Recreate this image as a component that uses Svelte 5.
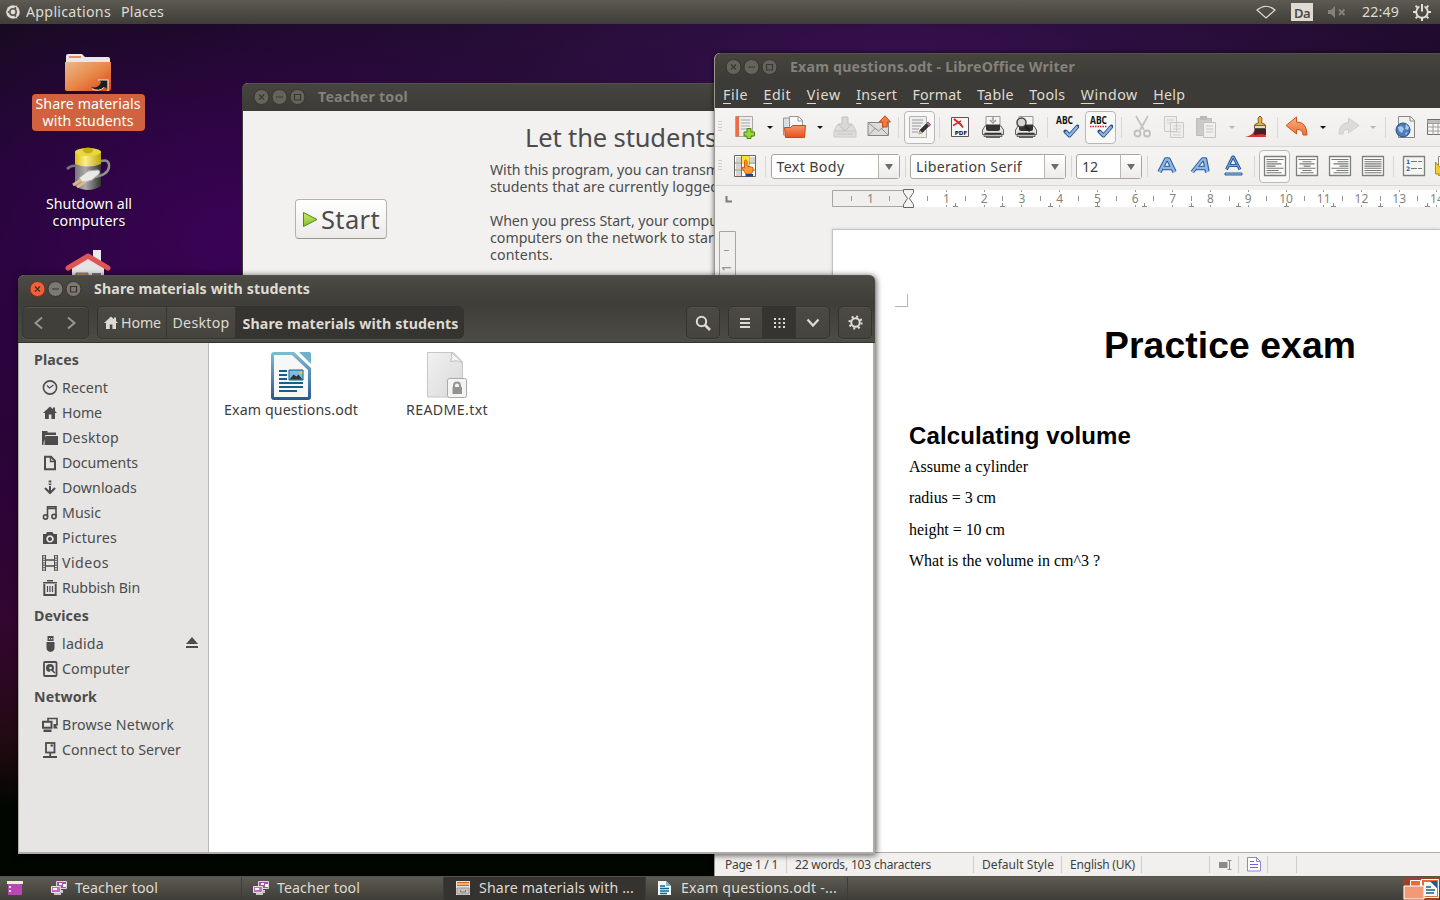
<script>
  // Spreads the letters of a label so that it takes up the given width.
  function fit(node, width) {
    if (!width) return;
    const natural = node.getBoundingClientRect().width;
    const count = node.textContent.length;
    node.style.letterSpacing = (width - natural) / count + 'px';
  }

  const sidebar = [
    { title: 'Places', w: 45, rows: [
      ['recent', 'Recent', 46], ['home', 'Home', 40], ['folder', 'Desktop', 57], ['doc', 'Documents', 76],
      ['down', 'Downloads', 75], ['music', 'Music', 39], ['camera', 'Pictures', 55], ['film', 'Videos', 47], ['bin', 'Rubbish Bin', 78]
    ] },
    { title: 'Devices', w: 55, rows: [['usb', 'ladida', 42], ['disk', 'Computer', 68]] },
    { title: 'Network', w: 63, rows: [['net', 'Browse Network', 112], ['server', 'Connect to Server', 119]] }
  ];

  const menus = [
    ['', 'F', 'ile', 25], ['', 'E', 'dit', 28], ['', 'V', 'iew', 34], ['', 'I', 'nsert', 41], ['F', 'o', 'rmat', 49],
    ['T', 'a', 'ble', 37], ['', 'T', 'ools', 36], ['', 'W', 'indow', 57], ['', 'H', 'elp', 32]
  ];

  // Each tool: kind and the centre it sits on along the bar.
  const size = { caret: 10, dcaret: 10, sep: 1, grip: 8 };
  function lay(list) {
    let end = 715;
    return list.map(([k, c, w]) => {
      const width = w ?? size[k] ?? 24;
      const gap = c - width / 2 - end;
      end = c + width / 2;
      return { k, width, gap };
    });
  }
  const bar1 = lay([
    ['grip', 720], ['new', 745], ['caret', 769.5], ['open', 794], ['caret', 819.5], ['save', 845], ['mail', 878.5], ['sep', 898.5],
    ['edit', 919.5, 31], ['sep', 939.5], ['pdf', 960], ['print', 993], ['preview', 1026], ['sep', 1047.5], ['abc', 1067],
    ['abcr', 1100.5, 31], ['sep', 1121.5], ['cut', 1141.5], ['copy', 1174], ['paste', 1206], ['dcaret', 1231.5], ['brush', 1257],
    ['sep', 1277.5], ['undo', 1296.5], ['caret', 1322.5], ['redo', 1347.5], ['dcaret', 1372.5], ['sep', 1385.5], ['globe', 1405.5], ['table', 1438]
  ]);
  const bar2 = lay([
    ['grip', 720], ['gallery', 745], ['sep', 765.5], ['Text Body', 835, 129], ['sep', 905.5], ['Liberation Serif', 988, 156],
    ['sep', 1071.5], ['12', 1109, 66], ['sep', 1147.5], ['bold', 1166.5], ['italic', 1200], ['under', 1232.5], ['sep', 1254.5],
    ['left', 1274.5, 31], ['center', 1307], ['right', 1340], ['just', 1373], ['sep', 1393.5], ['list', 1414], ['mark', 1447]
  ]);
  const comboW = { 'Text Body': 68, 'Liberation Serif': 106, '12': 16 };

  const cm = 37.73;
  const numbers = Array.from({ length: 15 }, (_, i) => i).filter((i) => i > 0);
  const halves = Array.from({ length: 16 }, (_, i) => i - 1.5);
  const stops = Array.from({ length: 11 }, (_, i) => (i + 1) * 47.2);
  const wide = { left: [17, 11, 15, 9, 17, 12, 15], center: [17, 9, 15, 7, 17, 9, 13], right: [17, 11, 15, 9, 17, 12, 15], just: [17, 17, 17, 17, 17, 17, 17] };

  const tasks = [
    ['screens', 'Teacher tool', 83], ['screens', 'Teacher tool', 83], ['cabinet', 'Share materials with ...', 155], ['writer', 'Exam questions.odt -...', 156]
  ];
</script>

{#snippet txt(s, w)}<span class="t" use:fit={w}>{s}</span>{/snippet}

{#snippet buttons(active)}
  <svg class="wb" width="54" height="18" viewBox="0 0 54 18">
    <circle cx="9.500" cy="9" r="7.500" fill={active ? '#f0613a' : '#65635c'} stroke={active ? '#7d2e17' : '#36352f'} />
    <circle cx="27.500" cy="9" r="7.500" fill={active ? '#7b7972' : '#65635c'} stroke="#36352f" />
    <circle cx="45.500" cy="9" r="7.500" fill={active ? '#7b7972' : '#65635c'} stroke="#36352f" />
    <path d="M7 6.500l5 5m0-5l-5 5M24 9h7M42.500 6.500h6v5.500h-6z" fill="none" stroke={active ? '#3a302a' : '#393832'} stroke-width="1.200" />
  </svg>
{/snippet}

{#snippet ic(k)}
  <svg width="16" height="16" viewBox="0 0 16 16" fill="none" stroke="currentColor" stroke-width="1.6">
    {#if k === 'recent'}<circle cx="8" cy="7.5" r="6.6" /><path d="M5 5.5L7.5 8l4-3" stroke-width="1.3" />
    {:else if k === 'home'}<path fill="currentColor" stroke="none" d="M8 1.5L1 8h2v6h3.8v-4.5h2.6V14H13V8h2l-2-2V2.5h-2v1.7z" />
    {:else if k === 'folder'}<path fill="currentColor" stroke="none" d="M0 1h5.500v1.500H14V5H3.500L1.500 13v2H0zM4 6h12v9H2.500V8z" />
    {:else if k === 'doc'}<path d="M3 1.800h6l4 4v8.400H3z" stroke-width="2" /><path d="M8.500 1v5.500H14" stroke-width="1.300" />
    {:else if k === 'down'}<path d="M8 6V13M3 8l5 5 5-5" stroke-width="2" /><path d="M6.700.5h2.600v2H6.700zM6.700 3.500h2.600v1.500H6.700z" fill="currentColor" stroke="none" />
    {:else if k === 'music'}<path d="M5.500 12V1.800H14v9.700M5.500 3.500H14" /><circle cx="3.500" cy="12" r="2.100" /><circle cx="12" cy="11.500" r="2.100" />
    {:else if k === 'camera'}<path fill="currentColor" stroke="none" fill-rule="evenodd" d="M1 4h3l1-2h5.500l1 2H15v10H1zM8 5.200a3.700 3.700 0 1 0 .01 0zM8 7a2 2 0 1 1-.01 0z" />
    {:else if k === 'film'}<path d="M2 0v16M14 0v16" stroke-dasharray="1.300 1.100" stroke-width="1.500" /><path d="M3.500 0v16M12.500 0v16M.6 0v16M15.400 0v16" stroke-width="1" /><path d="M4 5h8.500M4 11h8.500" stroke-width="1.300" />
    {:else if k === 'bin'}<path d="M5 .8h6M1 2.800h14" stroke-width="1.600" /><path d="M2.300 4v11h11.400V4" stroke-width="1.900" /><path d="M5.500 6v6M8 6v6M10.500 6v6" stroke-width="1.200" />
    {:else if k === 'usb'}<path fill="currentColor" stroke="none" fill-rule="evenodd" d="M5.500 0h6v5h-6zM7 2v1.500h1V2zM9.200 2v1.500h1V2zM4.500 6h8v6q0 3-4 4-4-1-4-4z" />
    {:else if k === 'disk'}<rect x="2" y="1" width="12.500" height="14" rx="1" stroke-width="1.800" /><circle cx="8" cy="7" r="4" fill="currentColor" stroke="none" /><circle cx="8.500" cy="7" r="1.300" fill="#e6e5e3" stroke="none" /><path d="M8 10l4 2" stroke="#e6e5e3" /><path d="M9 8.500l4 3.500" />
    {:else if k === 'net'}<path d="M6 4V1.500h9V8" /><path d="M1 4.800h8.500v6H1z" stroke-width="2" /><path fill="currentColor" stroke="none" d="M1.500 12.500h8V15h-8zM11.500 7H16v1.500h-2l2 3h-4.500z" />
    {:else if k === 'server'}<rect x="4" y="1" width="8.500" height="9.500" stroke-width="1.800" /><path d="M8.500 3.500H11M8.200 10.500V14M1 15h14" stroke-width="1.800" />
    {/if}
  </svg>
{/snippet}

{#snippet check(x, y)}
  <path d="M{x} {y}l4 4 8-9" fill="none" stroke="#234f88" stroke-width="4" stroke-linejoin="round" stroke-linecap="round" />
  <path d="M{x} {y}l4 4 8-9" fill="none" stroke="#8db6e6" stroke-width="2.300" stroke-linejoin="round" />
{/snippet}

{#snippet tool(k)}
  <svg width="24" height="24" viewBox="0 0 24 24" fill="none" stroke-linejoin="round">
    {#if k === 'new'}
      <path d="M2.500 1.500h17v20h-17z" fill="#eee" stroke="#aaa89f" /><path d="M3 1.500h3v20H3z" fill="#ee6b43" /><path d="M8 5h9M8 8h9M8 11h9M8 14h7" stroke="#a9a7a0" />
      <path d="M14 13.500h4v3.500h3.500v4H18v2.500h-4V21h-3v-4h3z" fill="#97d637" stroke="#4b8510" />
    {:else if k === 'open'}
      <path d="M1.500 20V3h6v2H14v15z" fill="#ddd" stroke="#98968e" /><path d="M7.500 1.500h9l4 4V14h-13z" fill="#fbfbfb" stroke="#98968e" /><path d="M16 1.500V6h5" stroke="#98968e" />
      <path d="M2.500 12.500h6l2-2h13l-1 12h-19z" fill="url(#gOrange)" stroke="#cd4519" />
    {:else if k === 'save'}
      <path d="M4 10l-3 6v6h22v-6l-3-6z" fill="#dedddb" stroke="#cbcac8" /><path d="M2 16h20M4 19h16" stroke="#c6c5c3" /><path d="M9 2h6v7h4l-7 7-7-7h4z" fill="#d8d8d6" stroke="#c2c1bf" />
    {:else if k === 'mail'}
      <path d="M1 7.500h20.500v13H1z" fill="#dcdcda" stroke="#85847f" /><path d="M1.500 8l10 8 10-8M1.500 20l7-7M21 20l-7-7" stroke="#92918c" /><path d="M15.500 12V7h-3.500L18 .8 23.500 7h-3.300v5z" fill="#f37b45" stroke="#c44d1c" />
    {:else if k === 'edit'}
      <path d="M1.500 1.500h17v21h-17z" fill="#eee" stroke="#b4b3b0" /><path d="M4 5h11M4 8h11M4 11h9M4 14h7M4 17h6" stroke="#999" /><path d="M11 19l1-4 6.500-6.500 2.500 2.500L14.500 17.500z" fill="#333" stroke="#333" stroke-width=".6" /><path d="M18.500 8.500L20 7l2.700 2.700L21 11.300z" fill="#bb7aa7" stroke="#80506d" /><path d="M10.500 19.500l1.500-4 2.500 2.300z" fill="#e3bd73" />
    {:else if k === 'pdf'}
      <path d="M3.500 2.500h17v19h-17z" fill="#f6f6f6" stroke="#555" /><path d="M6 4l8 7M5 10.500c3-1 6-4 8-4.500" stroke="#db292a" stroke-width="1.500" /><path d="M6 4l6 4.500 3 4" stroke="#db292a" stroke-width="1.800" /><text x="13" y="20" class="pdf">PDF</text>
    {:else if k === 'print' || k === 'preview'}
      <path d="M5 1.500h14v10H5z" fill="#f4f4f4" stroke="#9b9a96" /><path d="M4 11l-2.500 4v4.500h21V15L20 11z" fill="#e6e6e4" stroke="#5e5e5a" /><path d="M5 9.500h14V14q0 2-2 2H7q-2 0-2-2z" fill="#333" /><path d="M3.500 18.500h17M5 22h14" stroke="#333" stroke-width="1.300" /><path d="M3 20v1.500h18V20" fill="#bbb" stroke="#666" />
      {#if k === 'print'}<path d="M12 2v4M9 5l3 3 3-3" stroke="#999" stroke-width="1.500" />{:else}<circle cx="7.500" cy="7.500" r="4.500" fill="#d6d6d4" stroke="#444" stroke-width="1.500" /><path d="M11 11l5 5" stroke="#222" stroke-width="2.500" />{/if}
    {:else if k === 'abc' || k === 'abcr'}
      <text x="1" y="9" class="abc" textLength="17" lengthAdjust="spacingAndGlyphs">ABC</text>{#if k === 'abcr'}<path d="M1 11.500h17" stroke="#d7262d" stroke-width="1.500" stroke-dasharray="1.500 1" />{/if}{@render check(10.500, 16.500)}
    {:else if k === 'cut'}
      <path d="M6 1l8 14M18 1l-8 14" stroke="#c4c3c1" stroke-width="1.800" /><circle cx="7.500" cy="18.500" r="3" stroke="#c0bfbd" stroke-width="1.800" /><circle cx="17" cy="18.500" r="3" stroke="#c0bfbd" stroke-width="1.800" />
    {:else if k === 'copy'}
      <path d="M2.500 1.500h12v15h-12zM8.500 7.500h13v15h-13z" fill="#efeeed" stroke="#cac9c7" /><path d="M5 5h7M5 8h3M11 11h8M11 14h8M11 17h8M11 20h8" stroke="#d0cfcd" />
    {:else if k === 'paste'}
      <path d="M2.500 3.500h15v17h-15z" fill="#cbcac8" stroke="#bdbcba" /><path d="M6 1h7v4H6z" fill="#bbbab8" /><path d="M9.500 7.500h12v15h-12z" fill="#f0efee" stroke="#c3c2c0" /><path d="M12 11h7M12 14h7M12 17h7" stroke="#c6c5c3" />
    {:else if k === 'brush'}
      <path d="M0 22q8-2 9-6h11l1 6z" fill="#d83139" /><path d="M9.500 14h11.500v6l-4-1-8 1z" fill="#4a2022" /><path d="M9.500 10.500h11v3h-11z" fill="#ddd" stroke="#54504b" /><path d="M9.500 10.500q0-2 4-2.500l-.5-4.500Q15-1 17 3.500L16.500 8q4 .5 4 2.500z" fill="#e6b04e" stroke="#8a6117" />
    {:else if k === 'undo'}
      <path d="M1 10.500L11.500 2v5Q22 7 22 20h-4q0-6-6.500-5.500V19z" fill="url(#gUndo)" stroke="#c8581f" />
    {:else if k === 'redo'}
      <path d="M23 10.500L12.500 3v4.500Q3 8 3 19h4q0-5 5.500-4.500V18z" fill="#dcdbd9" stroke="#d0cfcd" />
    {:else if k === 'globe'}
      <path d="M4.500 1.500h12l4 4v17h-16z" fill="#f1f1f0" stroke="#888782" /><path d="M16 1.500V6h5" stroke="#888782" /><circle cx="9" cy="15" r="7" fill="#4b7bb8" stroke="#254f86" /><path d="M4 12l4-1 2 3-2 4-3-2zM12 9l3 3-1 3-3-1zM11 18l3-1-2 3z" fill="#a9c9ec" />
    {:else if k === 'table'}
      <path d="M1.500 4.500h21v15h-21z" fill="#f5f5f4" stroke="#6c6b66" /><path d="M1.500 5h21v3h-21z" fill="#bdbcb9" /><path d="M1.500 8.500h21M1.500 12h21M1.500 16h21M7 8v12M12 8v12" stroke="#a09f9b" />
    {:else if k === 'gallery'}
      <path d="M1.500 1.500h21v21h-21z" fill="#fff" stroke="#666560" /><path d="M3 3h5v5H3zM3 10h5v5H3zM3 17h5v5H3zM17 3h5v5h-5z" fill="#d3d2cf" /><path d="M8.500 2v20M16 2v20M2 9h20M2 16h20" stroke="#73726d" /><path d="M9 2h7v8H9z" fill="#fddf36" />
      <path d="M11.500 7.500q0-1.500 1.200-1.500T14 7.500V12l6 1.500V17q-1 3-3 3h-4l-4-6 1-1 1.500 1z" fill="#f99a38" stroke="#cf5f0d" /><path d="M12.500 20h7.500v2.500h-7.500z" fill="#1f4583" />
    {:else if k === 'bold' || k === 'italic'}
      <g transform={k === 'italic' ? 'translate(5 0) skewX(-16)' : ''}><path d="M4.500 18L11 5.500h2.500L19.500 18M8 14h9" stroke="#2a5c9c" stroke-width="4.500" /><path d="M4.500 18L11 5.500h2.500L19.500 18M8 14h9" stroke="#8fb5e2" stroke-width="2.500" /></g>
    {:else if k === 'under'}
      <path d="M5.500 15.500L11.700 3h.8L19 15.500M8 11.500h8" stroke="#2a5c9c" stroke-width="3" /><path d="M5.500 15.500L11.700 3h.8L19 15.500M8 11.500h8" stroke="#86aedd" stroke-width="1" /><path d="M4 19h17v2H4z" fill="#a3c2e8" stroke="#2a5c9c" />
    {:else if wide[k]}
      <path d="M1.500 2.500h21v19h-21z" fill="#fbfbfa" stroke="#7d7f7a" stroke-width="1.300" />
      {#each wide[k] as l, i}<path d="M{k === 'center' ? 12 - l / 2 : k === 'right' ? 20.500 - l : 3.500} {5.500 + i * 2.200}h{l}" stroke="#787a75" stroke-width="1.100" />{/each}
    {:else if k === 'list'}
      <path d="M1.500 2.500h21v19h-21z" fill="#f3f6f2" stroke="#7d7f7a" stroke-width="1.300" /><path d="M9 7.500h11M9 14.500h11" stroke="#777" stroke-dasharray="6 1" /><text x="4" y="10" class="num">1</text><text x="4" y="17" class="num">2</text>
    {:else if k === 'mark'}
      <path d="M3.500 2.500h19v19h-19z" fill="#fff" stroke="#8a8985" /><path d="M.5 8l5 6 5-5v11H.5z" fill="#f4ce2c" stroke="#b38d0b" />
    {/if}
  </svg>
{/snippet}

{#snippet bar(items)}
  {#each items as { k, width, gap }}
    <div class="slot" style:width="{width}px" style:margin-left="{gap}px">
      {#if k === 'sep'}<i class="sep"></i>
      {:else if k === 'grip'}<i class="grip"></i>
      {:else if k === 'caret' || k === 'dcaret'}<i class="caret" class:dis={k === 'dcaret'}></i>
      {:else if comboW[k]}<div class="combo"><div class="val">{@render txt(k, comboW[k])}</div><div class="arrow"><i></i></div></div>
      {:else}<div class="ib" class:pressed={width === 31}>{@render tool(k)}</div>{/if}
    </div>
  {/each}
{/snippet}

<div class="screen">
  <svg class="defs" width="0" height="0"><defs>
    <linearGradient id="gOrange" x1="0" y1="0" x2="0" y2="1"><stop offset="0" stop-color="#f99468" /><stop offset="1" stop-color="#e5501f" /></linearGradient>
    <linearGradient id="gUndo" x1="0" y1="0" x2="0" y2="1"><stop offset="0" stop-color="#f9b184" /><stop offset="1" stop-color="#ee6f35" /></linearGradient>
    <linearGradient id="gFolder" x1="0" y1="0" x2="1" y2="1"><stop offset="0" stop-color="#e9b98a" /><stop offset=".5" stop-color="#e9884a" /><stop offset="1" stop-color="#d94516" /></linearGradient>
    <linearGradient id="gBatt" x1="0" y1="0" x2="1" y2="0"><stop offset="0" stop-color="#777" /><stop offset=".4" stop-color="#aaa" /><stop offset="1" stop-color="#333" /></linearGradient>
    <linearGradient id="gYel" x1="0" y1="0" x2="1" y2="0"><stop offset="0" stop-color="#d8bf13" /><stop offset=".4" stop-color="#fbf08a" /><stop offset="1" stop-color="#bba50d" /></linearGradient>
    <linearGradient id="gWriter" x1="0" y1="0" x2="0" y2="1"><stop offset="0" stop-color="#7cbdd3" /><stop offset="1" stop-color="#29568f" /></linearGradient>
    <linearGradient id="gPaper" x1="0" y1="0" x2="1" y2="1"><stop offset="0" stop-color="#f2f2f2" /><stop offset="1" stop-color="#d8d8d8" /></linearGradient>
    <linearGradient id="gPlay" x1="0" y1="0" x2="0" y2="1"><stop offset="0" stop-color="#cdea63" /><stop offset="1" stop-color="#84bd2a" /></linearGradient>
  </defs></svg>

  <header class="panel top">
    <svg width="14" height="14" viewBox="0 0 14 14"><circle cx="7" cy="7" r="6.800" fill="#dfdbd2" /><circle cx="7" cy="7" r="3.200" fill="none" stroke="#56544d" stroke-width="1.600" /><path d="M0 7h3.500M9 3.500l2-3M9 10.500l2 3" stroke="#dfdbd2" stroke-width="1" /><circle cx="2.700" cy="7" r="1.100" fill="#56544d" /><circle cx="9.300" cy="3.200" r="1.100" fill="#56544d" /><circle cx="9.300" cy="10.800" r="1.100" fill="#56544d" /></svg>
    <div class="m1">{@render txt('Applications', 85)}</div>
    <div class="m2">{@render txt('Places', 43)}</div>
    <div class="tray">
      <svg width="20" height="14" viewBox="0 0 20 14"><path d="M1 5Q10-2.500 19 5L10 13z" fill="none" stroke="#dfdbd2" stroke-width="1.200" /></svg>
      <div class="lang">{@render txt('Da', 16)}</div>
      <svg width="18" height="12" viewBox="0 0 18 12"><path d="M0 4h3l4-4v12L3 8H0z" fill="#85827a" /><path d="M11 3.500l5.500 5.500M16.500 3.500L11 9" stroke="#85827a" stroke-width="1.800" /></svg>
      <div class="clock">{@render txt('22:49', 37)}</div>
      <svg width="18" height="18" viewBox="0 0 18 18" fill="none" stroke="#e4e0d8"><circle cx="9" cy="9" r="5.800" stroke-width="1.900" /><path d="M9 15v3M0 9h3M15 9h3M2.600 2.600l2 2M15.400 2.600l-2 2M2.600 15.400l2-2M15.400 15.400l-2-2" stroke-width="2" /><path d="M9 0v8" stroke="#504e48" stroke-width="5" /><path d="M9 1v7.500" stroke-width="2" /></svg>
    </div>
  </header>

  <section class="desk">
    <div class="di">
      <svg width="48" height="42" viewBox="0 0 48 42"><path d="M2 38V4q0-2 2-2h14l3 3h23q2 0 2 2v31z" fill="#e9e7ea" /><path d="M5 5h12" stroke="#eb8d5b" stroke-width="2" /><path d="M1 10h46v27q0 2-2 2H4q-3 0-3-2z" fill="url(#gFolder)" /><path d="M27 35q8 2 10-5l-2-2h9v10l-3-3q-6 6-14 0z" fill="#1d1d1d" /><path d="M34 28h10v11" fill="none" stroke="#f4e9df" stroke-width="1.200" /><path d="M28 37q7 3 12-1.500" fill="none" stroke="#d8d0ca" /></svg>
      <div class="lab sel"><div>{@render txt('Share materials', 105)}</div><div>{@render txt('with students', 91)}</div></div>
    </div>
    <div class="di two">
      <svg width="48" height="46" viewBox="0 0 48 46"><path d="M3 23q4-4 9-3" stroke="#777" stroke-width="2.500" fill="none" /><path d="M11 18h26v22q-13 8-26 0z" fill="url(#gBatt)" /><path d="M11 6q13-7 26 0v12q-13 5-26 0z" fill="url(#gYel)" /><path d="M11 6q13 7 26 0" stroke="#c9b31c" fill="none" /><ellipse cx="24" cy="6" rx="13" ry="4" fill="#e9d73e" /><ellipse cx="24" cy="4.500" rx="5" ry="3" fill="#c7ac1a" /><path d="M37 15q9-2 8 6T30 31" stroke="#8e8e8e" stroke-width="2.500" fill="none" /><path d="M15 32l9-7 9-1q4 0 2 4l-7 6-9 3z" fill="#e9e9e7" stroke="#aaa" /><path d="M17 34l-8 5M21 36l-8 5" stroke="#d9b98d" stroke-width="3" /></svg>
      <div class="lab"><div>{@render txt('Shutdown all', 86)}</div><div>{@render txt('computers', 73)}</div></div>
    </div>
    <div class="di three">
      <svg width="48" height="40" viewBox="0 0 48 40"><path d="M29 1h8v14h-8z" fill="#e9e9e9" /><path d="M8 18L24 7l16 11v20H8z" fill="#e4e4e4" /><path d="M12 24h12v12H12z" fill="#d88a4b" stroke="#777" /><path d="M28 24h9v6h-9z" fill="#777" /><path d="M4 19L24 7l20 12" stroke="#e05454" stroke-width="5" fill="none" stroke-linejoin="round" stroke-linecap="round" /></svg>
    </div>
  </section>

  <section class="win teacher">
    <div class="tb">{@render buttons(false)}<b class="tt">{@render txt('Teacher tool', 90)}</b></div>
    <div class="tbody">
      <div class="start"><svg width="16" height="17" viewBox="0 0 16 17"><path d="M1.500 1.500L15 8.500l-13.500 7z" fill="url(#gPlay)" stroke="#4e8a1a" /></svg><span class="big">{@render txt('Start', 59)}</span></div>
      <div class="copy">
        <div class="big h">{@render txt('Let the students', 192)}</div>
        <div>{@render txt('With this program, you can transm', 229)}</div>
        <div>{@render txt('students that are currently logged', 229)}</div>
        <div class="gap">{@render txt('When you press Start, your compu', 228)}</div>
        <div>{@render txt('computers on the network to start', 229)}</div>
        <div>{@render txt('contents.', 63)}</div>
      </div>
    </div>
  </section>

  <section class="win office">
    <div class="tb">{@render buttons(false)}<b class="tt">{@render txt('Exam questions.odt - LibreOffice Writer', 285)}</b></div>
    <nav class="menu">{#each menus as [a, u, b, w]}<span class="t" use:fit={w}>{a}<u>{u}</u>{b}</span>{/each}</nav>
    <div class="bar">{@render bar(bar1)}</div>
    <div class="bar">{@render bar(bar2)}</div>
    <svg class="ruler" width="725" height="43" viewBox="715 186 725 43">
      <path d="M726.500 196v5.500h5.500" stroke="#7c7b76" stroke-width="2" fill="none" />
      <path d="M909 190h531v17H909z" fill="#fff" />
      <path d="M832.500 190.500H909v16h-76.500z" fill="#f0efee" stroke="#a8a6a1" />
      <text x="870.500" y="203">1</text>
      {#each numbers as n}<text x={908.700 + n * cm} y="203">{n}</text><path d="M{Math.round(908.200 + n * cm)}.500 190v2m0 13v2" stroke="#999" />{/each}
      {#each halves as h}<path d="M{Math.round(908 + h * cm)}.500 196v5" stroke="#999" />{/each}
      {#each stops as s}<path d="M{Math.round(908 + s)}.500 203v4m-2.500-.5h5" stroke="#8b8a86" />{/each}
      <path d="M903.500 189.500h10v3l-4 6 4 6v3h-10v-3l4-6-4-6z" fill="#f4f4f3" stroke="#666" />
    </svg>
    <div class="paper">
      <svg class="vr" width="17" height="60" viewBox="0 0 17 60"><path d="M.5 60V.5h16V60" fill="#f0efee" stroke="#a8a6a1" /><path d="M5 19.500h5" stroke="#999" /><text x="-37" y="12" transform="rotate(-90)">1</text></svg>
      <article>
        <i class="corner"></i>
        <h1>{@render txt('Practice exam', 252)}</h1>
        <h2>{@render txt('Calculating volume', 222)}</h2>
        <p>{@render txt('Assume a cylinder', 119)}</p>
        <p>{@render txt('radius = 3 cm', 87)}</p>
        <p>{@render txt('height = 10 cm', 96)}</p>
        <p>{@render txt('What is the volume in cm^3 ?', 191)}</p>
      </article>
    </div>
    <footer>
      <div class="s1">{@render txt('Page 1 / 1', 53)}</div>
      <div class="s2">{@render txt('22 words, 103 characters', 136)}</div>
      <div class="s3">{@render txt('Default Style', 72)}</div>
      <div class="s4">{@render txt('English (UK)', 65)}</div>
      <div class="s5"></div>
      <div class="s6"><svg width="13" height="10" viewBox="0 0 13 10"><path d="M0 2h8.500v6H0z" fill="#8b8a88" /><path d="M10.500 0v10M8.500.5h4M8.500 9.500h4" stroke="#8b8a88" /></svg></div>
      <div class="s6 s7"><svg width="15" height="15" viewBox="0 0 15 15"><path d="M.5.500h9l4 4v9.500H.5zM9.500.500v4h4" fill="#fff" stroke="#8c85e8" /><path d="M3 4.500h4M3 7.500h8M3 10.500h8" stroke="#6e67d6" /></svg></div>
      <div class="s6"></div>
    </footer>
  </section>

  <section class="win files">
    <div class="tb">{@render buttons(true)}<b class="tt">{@render txt('Share materials with students', 216)}</b></div>
    <div class="tools">
      <div class="grp nav dim"><span><svg width="10" height="14" viewBox="0 0 10 14"><path d="M8 1.500L1.500 7 8 12.500" /></svg></span><span><svg width="10" height="14" viewBox="0 0 10 14"><path d="M1 1.500L7.500 7 1 12.500" /></svg></span></div>
      <div class="grp path">
        <span class="ph">{@render ic('home')}{@render txt('Home', 40)}</span>
        <span class="pd">{@render txt('Desktop', 57)}</span>
        <b class="pc on">{@render txt('Share materials with students', 216)}</b>
      </div>
      <div class="grp one search"><span><svg width="16" height="16" viewBox="0 0 16 16"><circle cx="6.500" cy="6.500" r="4.700" /><path d="M10 10l5 5" stroke-width="2.600" /></svg></span></div>
      <div class="grp views">
        <span><svg width="10" height="12" viewBox="0 0 10 12"><path d="M0 2h10M0 6h10M0 10h10" /></svg></span>
        <span class="on"><svg width="11" height="11" viewBox="0 0 11 11"><path d="M0 2h11M0 6h11M0 10h11" stroke-dasharray="2 2.500" /></svg></span>
        <span><svg width="14" height="10" viewBox="0 0 14 10"><path d="M1.500 1.500L7 7.500l5.500-6" stroke-width="2.200" /></svg></span>
      </div>
      <div class="grp one"><span><svg width="15" height="15" viewBox="0 0 15 15"><circle cx="7.500" cy="7.500" r="4.200" /><circle cx="7.500" cy="7.500" r="6" stroke-dasharray="2 2.710" stroke-width="2.200" /></svg></span></div>
    </div>
    <div class="fbody">
      <aside>
        {#each sidebar as g}
          <b class="gh">{@render txt(g.title, g.w)}</b>
          {#each g.rows as [k, s, w]}
            <div class="row">{@render ic(k)}{@render txt(s, w)}{#if k === 'usb'}<svg class="eject" width="12" height="11" viewBox="0 0 12 11"><path d="M0 7l6-7 6 7zM0 9h12v2H0z" fill="#4c4c4c" /></svg>{/if}</div>
          {/each}
        {/each}
      </aside>
      <main>
        <figure>
          <svg width="40" height="48" viewBox="0 0 40 48"><path d="M3 0h20l17 16v29q0 3-3 3H3q-3 0-3-3V3q0-3 3-3z" fill="url(#gWriter)" /><path d="M3 3h18l16 15v27H3z" fill="#f7f7f7" /><path d="M28 0h10q2 0 2 2v10z" fill="#6bb2ca" /><path d="M8 19h8M8 23h8M8 27h8M8 31h24M8 35h24M8 39h18" stroke="#12618c" stroke-width="2" /><path d="M18 18h14v10H18z" fill="#7cbde3" stroke="#12618c" /><path d="M18.500 27.500l4-5 3 2 2-2 4 5z" fill="#333" /><circle cx="30" cy="20.500" r="1.500" fill="#f3c43c" /></svg>
          <figcaption>{@render txt('Exam questions.odt', 134)}</figcaption>
        </figure>
        <figure>
          <svg width="40" height="48" viewBox="1 0 40 48"><path d="M1.500.500h26l9 9.500v35h-35z" fill="url(#gPaper)" stroke="#c6c6c6" /><path d="M25.500.500q1 5-1 9 6-2 12 1z" fill="#f6f6f6" stroke="#c0c0c0" /><rect x="21.500" y="26.500" width="19" height="19" rx="2" fill="#f4f4f2" stroke="#aaa9a5" /><path d="M28 36v-2.500q0-3 3-3t3 3V36" stroke="#969690" stroke-width="2" fill="none" /><path d="M26.500 35h9.500v7h-9.500z" fill="#94948e" /></svg>
          <figcaption>{@render txt('README.txt', 82)}</figcaption>
        </figure>
      </main>
    </div>
  </section>

  <div class="panel bottom">
    <div class="show"><svg width="16" height="15" viewBox="0 0 16 15"><path d="M0 0h16v3H0z" fill="#efefd6" /><path d="M1 3h14v11H1z" fill="#b748b5" /><path d="M2 5h2v2H2zM2 9h2v2H2z" fill="#f4d8f2" /></svg></div>
    {#each tasks as [k, s, w], i}
      <div class="task" class:on={i === 2}>
        <svg width="18" height="16" viewBox="0 0 18 16">
          {#if k === 'screens'}<path d="M6.500 1.500h10v7h-10z" fill="#a84fa6" stroke="#d9d2d6" /><path d="M1.500 6.500h9v6h-9z" fill="#c26dbf" stroke="#e5dfe2" /><path d="M9 3h3v2H9zM3 8h4v2H3zM13 4h3v3h-3z" fill="#fff" /><path d="M4 14h7M12 10v3" stroke="#c9c5c0" stroke-width="2" />
          {:else if k === 'cabinet'}<path d="M2 1h14v14H2z" fill="#e5e4e1" /><path d="M3 2h12v4H3z" fill="#d8641b" /><path d="M3 4h12" stroke="#fff" /><path d="M3 8h12v6H3z" fill="#c4c3c0" stroke="#979590" /><path d="M6.500 10v2h5v-2" stroke="#777" fill="none" />
          {:else}<path d="M2 1h8l5 5v9H2z" fill="#f5f8fa" /><path d="M10 1l5 5h-5z" fill="#76b9d6" /><path d="M4 6h5M4 8.500h9M4 11h9M4 13.500h7" stroke="#12618c" stroke-width="1.300" />{/if}
        </svg>
        {@render txt(s, w)}
      </div>
    {/each}
    <svg class="ws" width="36" height="22" viewBox="0 0 36 22"><path d="M0 0h36v22H0z" fill="#96432a" /><path d="M7.500 2.500h10v6h-10zM18.500 1.500h17v18h-17z" fill="#e66c3e" stroke="#fff" /><path d="M1 8h20v13H1z" fill="#f09a78" stroke="#fff" /><path d="M21 4h7l6 6v8H21z" fill="#f7f7f7" /><path d="M27 3h7v7z" fill="#17618e" /><path d="M23 9h5M23 12h9M23 15h8" stroke="#17618e" stroke-width="1.500" /></svg>
  </div>
</div>

<style>
  :global(body) { margin: 0; overflow: hidden; }
  .screen { position: relative; width: 1440px; height: 900px; overflow: hidden; font: 14.2px/17px "Noto Sans", "Open Sans", sans-serif; color: #4c4c4c;
    background: radial-gradient(ellipse 380px 260px at 240px 240px, #3b0256 0, rgba(59, 2, 86, 0) 100%), radial-gradient(ellipse 700px 200px at 900px 60px, #36104e 0, rgba(54, 16, 78, 0) 100%), linear-gradient(180deg, #180b20 0, #1f0632 20%, #2c0338 55%, #32062f 70%, #230a12 82%, #010600 90%); }
  .defs { position: absolute; }
  .t { display: inline-block; white-space: pre; flex: none; }
  svg { display: block; flex: none; }
  .panel { position: absolute; z-index: 9; left: 0; width: 1440px; height: 24px; display: flex; align-items: center; color: #dfdbd2; background: linear-gradient(#5c5a51, #3e3d38); box-sizing: border-box; }
  .top { top: 0; padding: 0 0 1px 6px; }
  .m1 { margin-left: 6px; }
  .m2 { margin-left: 10px; }
  .tray { margin-left: auto; display: flex; align-items: center; padding-right: 9px; }
  .lang { width: 22px; height: 18px; margin: 0 15px; background: #dfdbd2; color: #4d4b45; font-weight: 600; font-size: 13px; line-height: 20px; text-align: center; }
  .clock { margin: 0 14px 0 16px; }
  .desk { position: absolute; top: 52px; left: 16px; width: 144px; display: flex; flex-direction: column; }
  .di { display: flex; flex-direction: column; align-items: center; color: #fff; height: 94px; }
  .di.two { height: 103px; }
  .lab { text-align: center; padding: 1px 4px 2px; border-radius: 4px; text-shadow: 0 1px 1px rgba(0, 0, 0, .6); margin-top: 2px; }
  .two .lab { padding-left: 6px; }
  .sel { background: #d0623f; text-shadow: none; margin-top: 0; }
  .win { position: absolute; display: flex; flex-direction: column; border-radius: 6px 6px 0 0; box-sizing: border-box; }
  .tb { display: flex; align-items: center; height: 28px; flex: none; background: linear-gradient(#45443e, #3c3b37); border-top: 1px solid #53524b; box-sizing: border-box; border-radius: 6px 6px 0 0; color: #84827a; padding-bottom: 1px; }
  .wb { margin-left: 10px; }
  .tt { margin-left: 12px; padding-bottom: 1px; }
  .teacher { left: 242px; top: 83px; width: 600px; height: 300px; background: #f2f1f0; border-left: 1px solid #3c3b37; }
  .teacher .tb { margin-left: -1px; }
  .tbody { display: flex; padding: 7px 0 0 52px; }
  .start { display: flex; align-items: center; width: 92px; height: 40px; margin-top: 81px; box-sizing: border-box; border: 1px solid #b5b2ac; border-bottom-color: #99968f; border-radius: 4px; background: linear-gradient(#fff, #ebeae8); padding-left: 6px; gap: 3px; }
  .big { font-size: 25.500px; line-height: 38px; }
  .copy { margin-left: 103px; }
  .h { margin-left: 35px; height: 43px; line-height: 38px; }
  .gap { margin-top: 17px; }
  .office { left: 714px; top: 53px; width: 726px; height: 823px; background: #f1f0ee; border-left: 1px solid #9a9893; box-shadow: 0 0 5px rgba(0, 0, 0, .6); border-radius: 6px 0 0 0; overflow: hidden; }
  .office .tb { margin-left: -1px; border-radius: 6px 0 0 0; }
  .menu { display: flex; gap: 15.400px; height: 27px; flex: none; align-items: center; padding-left: 9px; margin-left: -1px; background: #3c3b37; color: #dfdbd2; }
  u { text-underline-offset: 3px; text-decoration-thickness: 1px; text-decoration-skip-ink: none; }
  .bar { display: flex; height: 39px; flex: none; box-sizing: border-box; align-items: center; background: linear-gradient(#f5f4f3, #efeeec); border-bottom: 1px solid #d8d6d3; }
  .slot { display: flex; flex: none; justify-content: center; align-items: center; height: 34px; }
  .sep { width: 1px; height: 21px; background: #d9d7d4; }
  .grip { width: 4px; height: 12px; background: repeating-linear-gradient(#cfcdca 0 1px, transparent 1px 3px); }
  .caret { border: 3px solid transparent; border-top: 3px solid #111; margin-top: 3px; }
  .caret.dis { border-top-color: #b9b7b4; }
  .pressed { width: 31px; height: 33px; box-sizing: border-box; border: 1px solid #bab8b4; border-radius: 4px; background: #f8f8f7; display: flex; align-items: center; justify-content: center; }
  .combo { display: flex; width: 100%; height: 25px; box-sizing: border-box; border: 1px solid #a9a6a0; border-radius: 3px; background: #fff; color: #3c3c3c; }
  .val { flex: 1; padding: 3px 0 0 5px; }
  .arrow { width: 20px; border-left: 1px solid #b9b6b1; background: linear-gradient(#fff, #ecebe9); display: flex; align-items: center; justify-content: center; }
  .arrow i { border: 4px solid transparent; border-top: 6px solid #6d6c68; border-bottom: 0; margin-top: 2px; }
  .pdf { font: bold 5.500px "DejaVu Sans", sans-serif; fill: #111; text-anchor: middle; }
  .abc { font: bold 10px "Noto Sans", sans-serif; fill: #111; }
  .num { font: bold 6px "DejaVu Sans", sans-serif; fill: #2a5c9c; }
  .ruler text, .vr text { font: 12px "Noto Sans", sans-serif; fill: #85837e; text-anchor: middle; }
  .paper { display: flex; flex: 1; min-height: 0; }
  .vr { margin: 2px 0 0 4px; }
  article { flex: 1; margin-left: 96px; background: #fff; border: 1px solid #c4c2be; border-width: 1px 0 0 1px; padding-left: 76px; color: #000; box-shadow: 0 0 3px rgba(0, 0, 0, .15); }
  .corner { display: block; width: 13px; height: 13px; box-sizing: border-box; border: 1px solid #b5b5b5; border-width: 0 1px 1px 0; margin: 64px 0 0 -14px; }
  h1 { margin: 16px 0 0 195px; font: bold 37.300px/44px "Liberation Sans", Arial, sans-serif; }
  h2 { margin: 55px 0 0; font: bold 24px/28px "Liberation Sans", Arial, sans-serif; }
  p { margin: 8px 0 13.300px; font: 16px/18px "Liberation Serif", serif; height: 18px; }
  p + p { margin-top: 0; }
  footer { display: flex; height: 24px; flex: none; box-sizing: border-box; border-top: 1px solid #b0aeaa; align-items: center; font-size: 12px; color: #3f3f3f; background: #f1f0ee; }
  footer div { height: 17px; box-sizing: border-box; border-right: 1px solid #d0cecb; display: flex; align-items: center; }
  .s1 { width: 72px; padding-left: 10px; }
  .s2 { width: 187px; padding-left: 8px; }
  .s3 { width: 88px; padding-left: 8px; }
  .s4 { width: 80px; padding-left: 8px; }
  .s5 { width: 68px; }
  .s6 { width: 29px; padding-left: 9px; }
  .s7 { padding-left: 8px; }
  .files { left: 18px; top: 275px; width: 857px; height: 579px; border-radius: 6px 6px 0 0; box-shadow: 1px 1px 6px rgba(0, 0, 0, .7); background: #a9a7a2; }
  .files .tb { color: #dfdbd2; background: linear-gradient(#4b4a44, #3f3e39); }
  .tools { display: flex; height: 40px; flex: none; box-sizing: border-box; padding: 3px 3px 3px 4px; border-bottom: 1px solid #34332e; background: linear-gradient(#3f3e39, #4d4b45); color: #dfdbd2; }
  .grp { display: flex; box-sizing: border-box; border: 1px solid #34332f; border-radius: 5px; background: linear-gradient(#4a4943, #45443e); box-shadow: 0 1px 0 #57554e, inset 0 1px 0 #55534c; overflow: hidden; }
  .grp > * { display: flex; align-items: center; justify-content: center; box-sizing: border-box; }
  .grp > * + * { border-left: 1px solid #37362f; }
  .grp svg { fill: none; stroke: #dfdbd2; stroke-width: 2; }
  .grp.path svg { stroke: none; color: #dfdbd2; }
  .nav { width: 67px; }
  .nav > * { flex: 1; }
  .nav > * + * { border: 0; }
  .dim { background: #403f3a; }
  .dim svg { stroke: #99968e; }
  .path { margin-left: 8px; width: 367px; }
  .ph { width: 68px; gap: 2px; }
  .pd { width: 69px; }
  .pc { flex: 1; padding: 1px 0 0 2px; }
  .on { background: #353430; }
  .one { width: 34px; margin-left: 8px; }
  .one > * { flex: 1; }
  .search { margin-left: auto; }
  .views { width: 102px; margin-left: 8px; }
  .views > * { flex: 1; }
  .fbody { display: flex; flex: 1; min-height: 0; padding: 0 2px 2px 1px; background: #aeaca7; }
  aside { width: 190px; box-sizing: border-box; background: #e6e5e3; border-right: 1px solid #bdbbb7; padding-top: 1px; }
  .gh { display: flex; align-items: center; height: 31px; padding: 0 0 1px 15px; box-sizing: border-box; }
  .row { display: flex; align-items: center; height: 25px; padding-left: 23px; gap: 4px; }
  .eject { margin: 0 10px 2px auto; }
  main { flex: 1; background: #fff; display: flex; padding: 9px 0 0 4px; color: #3c3c3c; }
  figure { margin: 0; width: 156px; display: flex; flex-direction: column; align-items: center; }
  figcaption { margin-top: 1px; }
  .bottom { top: 876px; padding-left: 7px; border-top: 1px solid #55534b; }
  .show { width: 31px; height: 24px; display: flex; align-items: center; }
  .task { display: flex; align-items: center; width: 202px; height: 24px; box-sizing: border-box; padding: 0 0 2px 10px; gap: 7px; border-right: 1px solid #3d3c36; }
  .task:nth-child(2) { width: 204px; padding-left: 12px; }
  .task.on { background: #34332f; }
  .ws { margin-left: auto; margin-right: 1px; }
</style>
